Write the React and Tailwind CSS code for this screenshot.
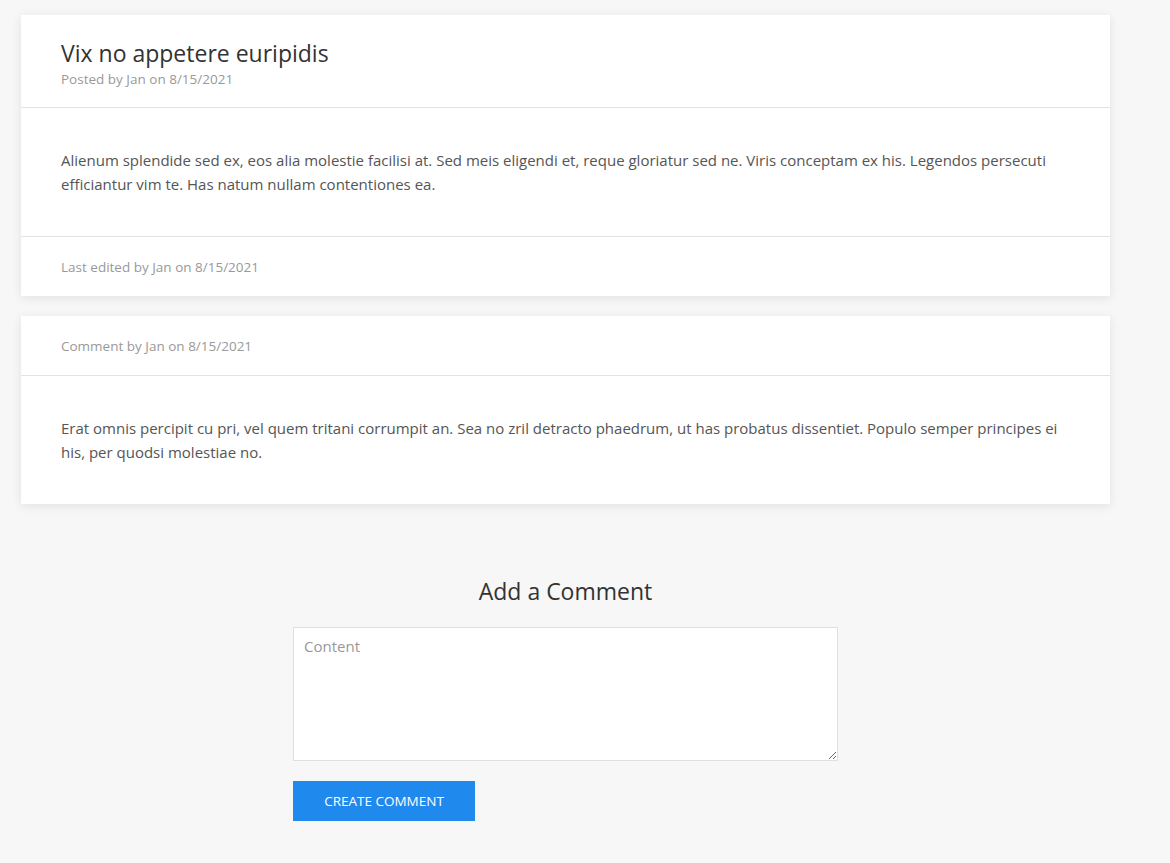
export default function App() {
  const font = { fontFamily: '"Open Sans", "Noto Sans", sans-serif' };
  return (
    <div className="min-h-[863px] w-full bg-[#f7f7f7] pt-[15px] pb-[42px]" style={font}>
      <div className="ml-[21px] w-[1089px] flex flex-col gap-5">
        <div className="bg-white shadow-[0_2px_10px_rgba(0,0,0,0.09)]">
          <div className="px-10 pt-[22px] pb-[18px] border-b border-[#e3e3e3]">
            <h1 className="text-[23px] leading-8 text-[#333]">Vix no appetere euripidis</h1>
            <div className="text-[13.5px] leading-5 text-[#999]">Posted by Jan on 8/15/2021</div>
          </div>
          <div className="px-10 py-10 text-[15px] leading-6 text-[#555]">
            Alienum splendide sed ex, eos alia molestie facilisi at. Sed meis eligendi et, reque gloriatur sed ne. Viris conceptam ex his. Legendos persecuti efficiantur vim te. Has natum nullam contentiones ea.
          </div>
          <div className="px-10 pt-5 pb-[19px] border-t border-[#e3e3e3] text-[13.5px] leading-5 text-[#999]">
            Last edited by Jan on 8/15/2021
          </div>
        </div>
        <div className="bg-white shadow-[0_2px_10px_rgba(0,0,0,0.09)]">
          <div className="px-10 pt-5 pb-[19px] border-b border-[#e3e3e3] text-[13.5px] leading-5 text-[#999]">
            Comment by Jan on 8/15/2021
          </div>
          <div className="px-10 py-10 text-[15px] leading-6 text-[#555]">
            Erat omnis percipit cu pri, vel quem tritani corrumpit an. Sea no zril detracto phaedrum, ut has probatus dissentiet. Populo semper principes ei his, per quodsi molestiae no.
          </div>
        </div>
        <div className="mt-[51px] flex flex-col items-center">
          <h2 className="text-[23px] leading-8 text-[#333]">Add a Comment</h2>
          <div className="mt-[20px] w-[545px] flex flex-col">
            <textarea
              placeholder="Content"
              className="h-[134px] w-full border border-[#e0e0e0] bg-white px-[10px] pt-[6px] pb-[8px] text-[15px] leading-6 text-[#555] placeholder:text-[#999] outline-none"
              style={font}
            />
            <div className="mt-5">
              <button className="h-10 w-[182px] bg-[#2089ee] text-white text-[13.5px] uppercase" style={font}>
                Create Comment
              </button>
            </div>
          </div>
        </div>
      </div>
    </div>
  );
}
